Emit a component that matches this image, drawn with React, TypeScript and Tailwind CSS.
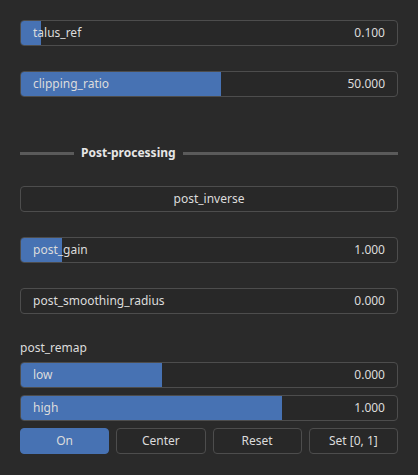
import React from "react";

const font = { fontFamily: '"Noto Sans", "Open Sans", sans-serif' };

function Slider({ label, value, fill }: { label: string; value: string; fill: number }) {
  return (
    <div className="relative h-[26px] rounded-[4px] border border-[#4d4d4d] bg-[#282828] overflow-hidden">
      <div className="absolute inset-y-0 left-0 bg-[#4772b3]" style={{ width: `${fill}px` }} />
      <div className="relative flex h-full items-center justify-between px-3 text-[12px] text-[#dcdcdc]">
        <span>{label}</span>
        <span>{value}</span>
      </div>
    </div>
  );
}

function Button({ children, active = false }: { children: React.ReactNode; active?: boolean }) {
  return (
    <div
      className={`flex h-[26px] items-center justify-center rounded-[4px] border text-[12px] text-[#dcdcdc] ${
        active ? "border-[#4772b3] bg-[#4772b3]" : "border-[#4d4d4d] bg-[#282828]"
      }`}
    >
      {children}
    </div>
  );
}

export default function App() {
  return (
    <div className="h-[475px] w-[418px] bg-[#2a2a2a] px-5 pt-5" style={font}>
      <Slider label="talus_ref" value="0.100" fill={20} />
      <div className="mt-[25px]">
        <Slider label="clipping_ratio" value="50.000" fill={200} />
      </div>

      {/* Section header */}
      <div className="mt-[48px] flex items-center gap-[7px]">
        <div className="h-[3px] w-[54px] bg-[#5a5a5a]" />
        <span className="text-[12px] font-bold leading-4 text-[#e6e6e6]">Post-processing</span>
        <div className="h-[3px] flex-1 bg-[#5a5a5a]" />
      </div>

      <div className="mt-[25px]">
        <Button>post_inverse</Button>
      </div>
      <div className="mt-[25px]">
        <Slider label="post_gain" value="1.000" fill={41} />
      </div>
      <div className="mt-[25px]">
        <Slider label="post_smoothing_radius" value="0.000" fill={0} />
      </div>

      <div className="mt-[26px] text-[12px] leading-4 text-[#dcdcdc]">post_remap</div>
      <div className="mt-[6px] flex flex-col gap-[7px]">
        <Slider label="low" value="0.000" fill={141} />
        <Slider label="high" value="1.000" fill={261} />
        <div className="grid grid-cols-4 gap-[7px]">
          <Button active>On</Button>
          <Button>Center</Button>
          <Button>Reset</Button>
          <Button>Set [0, 1]</Button>
        </div>
      </div>
    </div>
  );
}
